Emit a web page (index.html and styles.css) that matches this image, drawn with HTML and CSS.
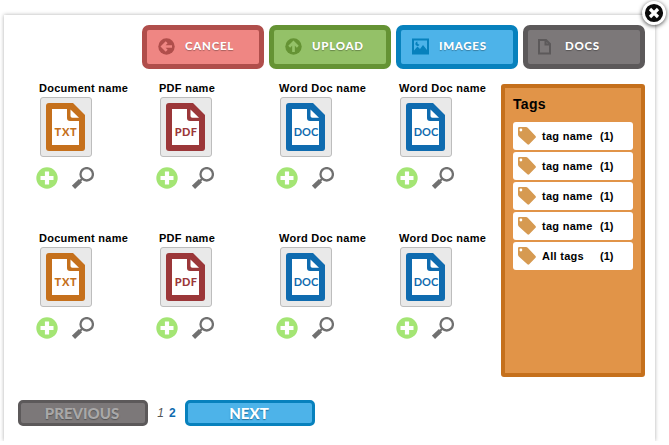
FILE: index.html
```html
<!DOCTYPE html>
<html lang="en">
<head>
<meta charset="utf-8">
<title>Documents</title>
<link rel="stylesheet" href="styles.css">
</head>
<body>
<svg class="sprite" aria-hidden="true">
  <symbol id="file" viewBox="0 0 39 48">
    <path d="M3 0H27L39 12V45Q39 48 36 48H3Q0 48 0 45V3Q0 0 3 0Z" fill="currentColor"/>
    <path d="M6 6H21V15Q21 18 24 18H33V42H6Z" fill="#fff"/>
    <path d="M24.500 6.500V13Q24.500 14.800 26.300 14.800H33Z" fill="#fff"/>
  </symbol>
  <symbol id="plus" viewBox="0 0 22 22">
    <circle cx="11" cy="11" r="10.700" fill="#a4e574"/>
    <path d="M11 4.500V17.500M4.500 11H17.500" stroke="#fff" stroke-width="4.200"/>
  </symbol>
  <symbol id="loupe" viewBox="0 0 22 22">
    <circle cx="14.700" cy="7.300" r="6.200" fill="none" stroke="#707070" stroke-width="2.300"/>
    <path d="M10.200 11.800L7 15" stroke="#707070" stroke-width="2.200"/>
    <path d="M8.500 13.700L1.500 20.300" stroke="#707070" stroke-width="4.600"/>
  </symbol>
  <symbol id="tag" viewBox="0 0 18 18">
    <path fill-rule="evenodd" d="M1.200 0H8Q9 0 9.700 .7L17.500 9Q18.300 9.900 17.500 10.700L11.200 17.300Q10.300 18.200 9.400 17.300L.8 9.400Q0 8.700 0 7.600V1.200Q0 0 1.200 0ZM2.900 1.600A1.400 1.400 0 1 0 2.900 4.400A1.400 1.400 0 1 0 2.900 1.600Z" fill="#d69a51"/>
  </symbol>
</svg>

<main class="dialog">
  <button class="close" aria-label="Close"><svg viewBox="0 0 24 24"><circle cx="12" cy="12" r="10.300" fill="#0b0b0b" stroke="#fff" stroke-width="2.400"/><path d="M8 8L16 16M16 8L8 16" stroke="#fff" stroke-width="3.200"/></svg></button>

  <nav class="toolbar">
    <button class="btn red"><svg viewBox="0 0 17 17"><circle cx="8.500" cy="8.500" r="8.200" fill="#b04e4b"/><path d="M14 8.500H5M8.700 4.200L4.400 8.500L8.700 12.800" fill="none" stroke="#ef8683" stroke-width="2.700"/></svg><span>CANCEL</span></button>
    <button class="btn green"><svg viewBox="0 0 17 17"><circle cx="8.500" cy="8.500" r="8.200" fill="#659334"/><path d="M8.500 14V5M4.200 8.700L8.500 4.400L12.800 8.700" fill="none" stroke="#94c168" stroke-width="2.700"/></svg><span>UPLOAD</span></button>
    <button class="btn blue"><svg viewBox="0 0 17 17"><path fill-rule="evenodd" d="M0 .5H17V16.500H0ZM2 2.500V12.500L5.500 8.500L8 11L11 7L15 12V2.500Z" fill="#0781bd"/><path d="M5.500 3.500A2.200 2.200 0 1 0 7.500 6.700A2.600 2.600 0 0 1 5.500 3.500Z" fill="#0781bd"/></svg><span>IMAGES</span></button>
    <button class="btn grey"><svg viewBox="0 0 17 17"><path d="M1 2H8L12 6V15.500H1ZM7.500 2V6.500H12" fill="none" stroke="#5c595a" stroke-width="2"/></svg><span>DOCS</span></button>
  </nav>

  <div class="content">
    <section class="docs">
      <article class="doc"><h3>Document name</h3><div class="thumb txt"><svg><use href="#file"/></svg><span>TXT</span></div><div class="actions"><svg><use href="#plus"/></svg><svg><use href="#loupe"/></svg></div></article>
      <article class="doc"><h3>PDF name</h3><div class="thumb pdf"><svg><use href="#file"/></svg><span>PDF</span></div><div class="actions"><svg><use href="#plus"/></svg><svg><use href="#loupe"/></svg></div></article>
      <article class="doc"><h3>Word Doc name</h3><div class="thumb word"><svg><use href="#file"/></svg><span>DOC</span></div><div class="actions"><svg><use href="#plus"/></svg><svg><use href="#loupe"/></svg></div></article>
      <article class="doc"><h3>Word Doc name</h3><div class="thumb word"><svg><use href="#file"/></svg><span>DOC</span></div><div class="actions"><svg><use href="#plus"/></svg><svg><use href="#loupe"/></svg></div></article>
      <article class="doc"><h3>Document name</h3><div class="thumb txt"><svg><use href="#file"/></svg><span>TXT</span></div><div class="actions"><svg><use href="#plus"/></svg><svg><use href="#loupe"/></svg></div></article>
      <article class="doc"><h3>PDF name</h3><div class="thumb pdf"><svg><use href="#file"/></svg><span>PDF</span></div><div class="actions"><svg><use href="#plus"/></svg><svg><use href="#loupe"/></svg></div></article>
      <article class="doc"><h3>Word Doc name</h3><div class="thumb word"><svg><use href="#file"/></svg><span>DOC</span></div><div class="actions"><svg><use href="#plus"/></svg><svg><use href="#loupe"/></svg></div></article>
      <article class="doc"><h3>Word Doc name</h3><div class="thumb word"><svg><use href="#file"/></svg><span>DOC</span></div><div class="actions"><svg><use href="#plus"/></svg><svg><use href="#loupe"/></svg></div></article>
    </section>

    <aside class="tags">
      <h2>Tags</h2>
      <ul>
        <li><svg><use href="#tag"/></svg><span class="name">tag name</span><span>(1)</span></li>
        <li><svg><use href="#tag"/></svg><span class="name">tag name</span><span>(1)</span></li>
        <li><svg><use href="#tag"/></svg><span class="name">tag name</span><span>(1)</span></li>
        <li><svg><use href="#tag"/></svg><span class="name">tag name</span><span>(1)</span></li>
        <li><svg><use href="#tag"/></svg><span class="name">All tags</span><span>(1)</span></li>
      </ul>
    </aside>
  </div>

  <footer class="pager">
    <button class="page-btn prev">PREVIOUS</button>
    <span class="pages"><i>1</i><b>2</b></span>
    <button class="page-btn next">NEXT</button>
  </footer>
</main>
</body>
</html>
```
FILE: styles.css
```css
* { box-sizing: border-box; }
body {
  margin: 0;
  padding: 15px 0 0 4px;
  background: #fff;
  font-family: "Liberation Sans", Arial, sans-serif;
  color: #000;
  overflow: hidden;
}
h2, h3, ul { margin: 0; padding: 0; list-style: none; }
button { margin: 0; padding: 0; font: inherit; }
svg { display: block; flex: none; }
.sprite { position: absolute; width: 0; height: 0; }

.dialog {
  position: relative;
  width: 651px;
  height: 426px;
  padding: 10px 10px 0 14px;
  background: #fff;
  box-shadow: 0 0 4px rgba(0, 0, 0, .32);
}
.close {
  position: absolute;
  top: -14px;
  right: -11px;
  width: 24px;
  height: 24px;
  border: 0;
  border-radius: 50%;
  background: none;
  box-shadow: 0 1px 4px rgba(0, 0, 0, .7);
}

.toolbar { display: flex; justify-content: flex-end; gap: 5px; }
.btn {
  display: flex;
  align-items: center;
  width: 122px;
  height: 44px;
  padding-left: 11px;
  border: 5px solid;
  border-radius: 7px;
  color: #fff;
  font: 900 11.5px/14px Lato, sans-serif;
  letter-spacing: .7px;
}
.btn svg { width: 17px; height: 17px; margin: 0 10px 2px 0; }
.btn span { margin-bottom: 3px; text-shadow: 0 1px 1px rgba(0, 0, 0, .3); }
.red { background: #ef8683; border-color: #b04e4b; }
.green { background: #94c168; border-color: #659334; }
.blue { background: #4db3e9; border-color: #0781bd; }
.grey { background: #7c7879; border-color: #5c595a; }
.grey svg { margin: 0 10px 2px -1px; }

.content { display: flex; justify-content: space-between; margin-top: 15px; }
.docs {
  display: grid;
  grid-template-columns: repeat(4, 120px);
  grid-auto-rows: 150px;
  height: 293px;
  margin-right: -17px;
  padding-left: 19px;
}
.doc { padding-left: 2px; }
.doc h3 {
  height: 13px;
  font-size: 11px;
  line-height: 9px;
  letter-spacing: .28px;
  white-space: nowrap;
}
.thumb {
  position: relative;
  width: 52px;
  height: 60px;
  margin-left: 1px;
  padding: 5px;
  border: 1px solid #bdbdbd;
  border-radius: 3px;
  background: #e9e9e9;
}
.thumb svg { width: 39px; height: 48px; }
.thumb span {
  position: absolute;
  left: 5px;
  top: 27px;
  width: 40px;
  text-align: center;
  font: 900 11px/13px Lato, sans-serif;
}
.txt { color: #c5701c; }
.txt span { letter-spacing: .7px; }
.pdf { color: #9b3739; }
.pdf span { letter-spacing: .4px; }
.word { color: #0f6baf; }
.word span { font-weight: 700; }
.actions { display: flex; gap: 14px; margin: 10px 0 0 -3px; }
.actions svg { width: 22px; height: 22px; }

.tags {
  width: 144px;
  height: 293px;
  padding: 8px 8px 0;
  border: 4px solid #c5701c;
  border-radius: 3px;
  background: #e19448;
}
.tags h2 { height: 26px; font-size: 14px; line-height: 16px; letter-spacing: .3px; }
.tags ul { display: grid; gap: 2px; }
.tags li {
  display: flex;
  align-items: center;
  height: 28px;
  padding-left: 5px;
  border-radius: 3px;
  background: #fff;
  font-size: 11px;
  font-weight: bold;
}
.tags svg { width: 18px; height: 18px; margin-right: 6px; }
.tags .name { width: 58px; letter-spacing: .28px; }

.pager { display: flex; margin-top: 23px; }
.page-btn {
  width: 130px;
  height: 26px;
  border: 3px solid;
  border-radius: 5px;
  font: 900 15px/18px Lato, sans-serif;
}
.page-btn { padding: 0 2px 1px 0; }
.prev {
  background: #7c7879;
  border-color: #5c595a;
  color: #a9a8a8;
  text-shadow: 0 1px 1px #555;
}
.next {
  background: #4db3e9;
  border-color: #0781bd;
  color: #fff;
  text-shadow: 0 1px 1px rgba(0, 70, 110, .6);
}
.pages {
  display: flex;
  justify-content: center;
  gap: 5px;
  width: 37px;
  font-size: 12px;
  line-height: 26px;
}
.pages i { color: #555; }
.pages b { color: #0f6baf; }
```
